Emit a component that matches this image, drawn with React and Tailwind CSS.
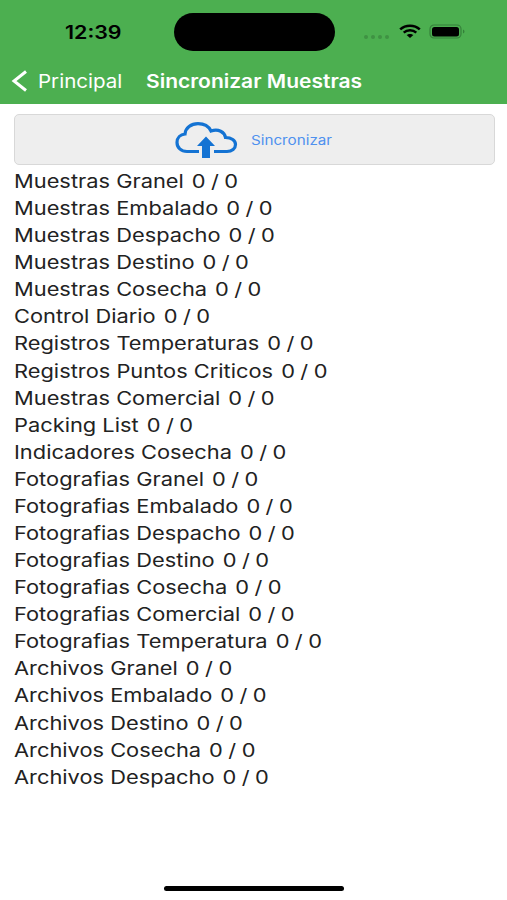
import clsx from 'clsx';

const rows = [
    'Muestras Granel',
    'Muestras Embalado',
    'Muestras Despacho',
    'Muestras Destino',
    'Muestras Cosecha',
    'Control Diario',
    'Registros Temperaturas',
    'Registros Puntos Criticos',
    'Muestras Comercial',
    'Packing List',
    'Indicadores Cosecha',
    'Fotografias Granel',
    'Fotografias Embalado',
    'Fotografias Despacho',
    'Fotografias Destino',
    'Fotografias Cosecha',
    'Fotografias Comercial',
    'Fotografias Temperatura',
    'Archivos Granel',
    'Archivos Embalado',
    'Archivos Destino',
    'Archivos Cosecha',
    'Archivos Despacho',
];

const Wide = ({ className, children }) => (
    <span className={clsx('inline-block origin-left whitespace-pre', className)}>{children}</span>
);

const StatusBar = () => (
    <div className="flex h-[58px] items-start text-black">
        <div className="w-[174px] pl-[65px] pt-[21px] text-[18px] leading-6 font-semibold">
            <Wide className="scale-x-[1.19]">12:39</Wide>
        </div>
        <div className="mt-[13px] h-[38px] w-[161px] rounded-full bg-black" />
        <div className="ml-[29px] mt-[35px] flex gap-[3px]">
            {[0, 1, 2, 3].map((dot) => (
                <span key={dot} className="h-[4px] w-[4px] rounded-full bg-[#3f9243]" />
            ))}
        </div>
        <svg className="ml-[10px] mt-[24px]" width="22" height="15" viewBox="0 0 22 15" fill="none" stroke="currentColor" strokeWidth="2.5">
            <path d="M1.2 5.4C6.5 0.4 15.5 0.4 20.8 5.4" />
            <path d="M4.7 8.6C8.2 5.4 13.8 5.4 17.3 8.6" />
            <path d="M11 14L7.6 11.1C9.3 9.6 12.7 9.6 14.4 11.1Z" fill="currentColor" stroke="none" />
        </svg>
        <svg className="ml-[8px] mt-[24px]" width="37" height="15" viewBox="0 0 37 15">
            <rect x="1" y="1" width="31" height="13" rx="4" fill="none" stroke="#35803a" strokeWidth="1.2" />
            <rect x="3" y="3" width="27" height="9.5" rx="2.5" fill="black" />
            <path d="M34 5.5C36 6.2 36 8.8 34 9.5Z" fill="#35803a" />
        </svg>
    </div>
);

const Header = () => (
    <header className="h-[104px] bg-[#4caf50]">
        <StatusBar />
        <div className="flex h-[46px] items-center text-white">
            <svg className="ml-[11px]" width="17" height="22" viewBox="0 0 17 22" fill="none" stroke="currentColor" strokeWidth="3">
                <path d="M15 1.5L3 11L15 20.5" />
            </svg>
            <div className="ml-[10px] w-[108px] pt-px text-[18.5px]">
                <Wide className="scale-x-[1.11]">Principal</Wide>
            </div>
            <h1 className="pt-px text-[18.5px] font-semibold">
                <Wide className="scale-x-[1.135]">Sincronizar Muestras</Wide>
            </h1>
        </div>
    </header>
);

const SyncButton = () => (
    <button className="flex h-[51px] w-full items-center rounded-[5px] border border-[#d8d8d8] bg-[#eeeeee]">
        <svg className="ml-[160px] mt-[2px]" width="64" height="38" viewBox="0 0 64 38">
            <path
                d="M24 29.5H12C6 29.5 2 25.5 2 20.5C2 15.5 5.5 12.5 10 12C10.5 6 16 1.7 23 1.7C29 1.7 33.5 4 36 9C43.5 6.5 49.5 10 50.5 15.5C56.5 15.5 60.5 18.5 60.5 22.5C60.5 26.5 57 29.5 52 29.5H39"
                fill="none"
                stroke="#1473d3"
                strokeWidth="3.2"
            />
            <path d="M31 14.5L40 24H35V36H27V24H22Z" fill="#1473d3" />
        </svg>
        <span className="ml-[12px] pt-[2px] text-[13px] text-[#4f91ee]">
            <Wide className="scale-x-[1.17]">Sincronizar</Wide>
        </span>
    </button>
);

const App = () => {
    return (
        <div className="flex h-[900px] w-[507px] flex-col overflow-hidden bg-white font-[Inter,sans-serif]">
            <Header />
            <main className="flex-grow pl-[14px] pr-[12px] pt-[10px]">
                <SyncButton />
                <ul className="pt-[3px] text-[18.5px] leading-[27.09px] text-[#222222]">
                    {rows.map((name) => (
                        <li key={name} className="h-[27.09px]">
                            <Wide className="scale-x-[1.18]">
                                {name} <span className="ml-[1.6px] [word-spacing:-0.6px]">0 / 0</span>
                            </Wide>
                        </li>
                    ))}
                </ul>
            </main>
            <div className="mb-[9px] h-[5px] w-[180px] self-center rounded-full bg-black" />
        </div>
    );
};

export default App;
